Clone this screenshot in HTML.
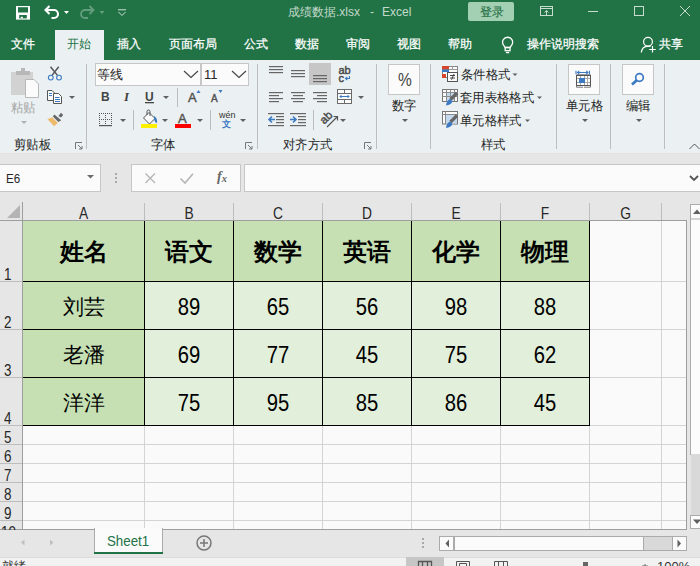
<!DOCTYPE html>
<html><head><meta charset="utf-8">
<style>
*{margin:0;padding:0;box-sizing:border-box}
html,body{width:700px;height:566px;overflow:hidden;background:#e6e6e6;font-family:"Liberation Sans",sans-serif;position:relative}
.a{position:absolute;white-space:nowrap}
.tt{color:#fff;font-size:12px;line-height:14px;-webkit-text-stroke:0.25px currentColor}
.rb{color:#262626;font-size:13px;line-height:14px;margin-top:1px;transform:scaleX(.95);transform-origin:0 0}
.rn{left:4px;margin-top:1.5px;font-size:16px;line-height:16px;color:#262626;transform:scaleX(.84);transform-origin:0 0}
.dg{font-size:23px!important;transform:scaleX(.88);margin-top:-1px}
.cell{position:absolute;text-align:center;color:#000}
</style></head><body>
<!-- title + tabs -->
<div class="a" style="left:0;top:0;width:700px;height:60px;background:#217346"></div>
<div class="a" style="left:55px;top:30px;width:49px;height:30px;background:#ebf1f2"></div>
<div class="a tt" style="left:288px;top:5px;color:#c3d9ca;-webkit-text-stroke:0">成绩数据.xlsx</div>
<div class="a tt" style="left:370px;top:5px;color:#c3d9ca;-webkit-text-stroke:0">-</div>
<div class="a tt" style="left:382px;top:5px;color:#c3d9ca;-webkit-text-stroke:0">Excel</div>
<svg class="a" style="left:0;top:0" width="700" height="60">
 <!-- save -->
 <rect x="16" y="6" width="14" height="13.6" fill="#fff"/>
 <rect x="18" y="7.2" width="10" height="5.3" fill="#217346"/>
 <rect x="19.2" y="15" width="7.6" height="3.4" fill="#217346"/>
 <rect x="20.8" y="16.8" width="2" height="1.6" fill="#fff"/>
 <!-- undo -->
 <path d="M46,10 H54 A4,4 0 0 1 54,18 H51.5" fill="none" stroke="#fff" stroke-width="2.1"/>
 <path d="M49.5,6 L45.5,10 L49.5,14" fill="none" stroke="#fff" stroke-width="2.1"/>
 <path d="M64,11 h5 l-2.5,3z" fill="#fff"/>
 <!-- redo (disabled) -->
 <g opacity="0.3">
 <path d="M93,10 H85 A4,4 0 0 0 85,18 H88" fill="none" stroke="#fff" stroke-width="1.8"/>
 <path d="M89.5,6 L93.5,10 L89.5,14" fill="none" stroke="#fff" stroke-width="1.8"/>
 <path d="M99.5,11 h5 l-2.5,3z" fill="#fff"/>
 </g>
 <!-- customize -->
 <path d="M118,9.8 h8" stroke="#d0e2d6" stroke-width="1"/>
 <path d="M118.5,12 L122,15.5 L125.5,12" fill="none" stroke="#d0e2d6" stroke-width="1"/>
 <!-- window icons -->
 <g fill="none" stroke="#c8dccf" stroke-width="1">
  <rect x="540.5" y="6.5" width="12" height="9"/>
  <path d="M540.5,8.5 H552.5 M546.5,15 V10.5 M544.5,12.5 L546.5,10.5 L548.5,12.5"/>
  <path d="M588,11.5 H598"/>
  <rect x="634.5" y="6.5" width="9" height="9"/>
  <path d="M680,6 L690,16 M690,6 L680,16"/>
 </g>
 <!-- lightbulb -->
 <g fill="none" stroke="#fff" stroke-width="1.3">
  <path d="M505.2,47.5 L503.2,44.6 A5,5 0 1 1 512,44.6 L510,47.5 Z"/>
  <rect x="505.2" y="47.5" width="4.8" height="3.2"/>
  <path d="M506,52.6 H509.2"/>
 </g>
 <!-- person -->
 <g fill="none" stroke="#fff" stroke-width="1.2">
  <circle cx="648" cy="41.8" r="4.4"/>
  <path d="M641.3,52.5 C641.8,49 644,46.6 647,46.4 H650.5"/>
  <path d="M652.5,46 V52.6 M649.2,49.5 H655.8"/>
 </g>
</svg>
<div class="a" style="left:468px;top:2px;width:46px;height:19px;background:#a3cfb2;border-radius:2px"></div>
<div class="a tt" style="left:480px;top:5px;color:#1f6e42;-webkit-text-stroke:0.1px currentColor">登录</div>

<div class="a tt" style="left:11px;top:37px">文件</div>
<div class="a tt" style="left:67px;top:37px;color:#217346;-webkit-text-stroke:0">开始</div>
<div class="a tt" style="left:117px;top:37px">插入</div>
<div class="a tt" style="left:169px;top:37px">页面布局</div>
<div class="a tt" style="left:244px;top:37px">公式</div>
<div class="a tt" style="left:295px;top:37px">数据</div>
<div class="a tt" style="left:346px;top:37px">审阅</div>
<div class="a tt" style="left:397px;top:37px">视图</div>
<div class="a tt" style="left:448px;top:37px">帮助</div>
<div class="a tt" style="left:527px;top:37px">操作说明搜索</div>
<div class="a tt" style="left:659px;top:37px">共享</div>

<!-- ribbon -->
<div class="a" style="left:0;top:60px;width:700px;height:93px;background:#ebf1f2"></div>


<!-- ribbon content -->
<svg class="a" style="left:0;top:0" width="700" height="160">
 <g fill="none" stroke="#bdbdbd" stroke-width="1">
  <line x1="86.5" y1="64" x2="86.5" y2="149"/>
  <line x1="257.5" y1="64" x2="257.5" y2="149"/>
  <line x1="376.5" y1="64" x2="376.5" y2="149"/>
  <line x1="430.5" y1="64" x2="430.5" y2="149"/>
  <line x1="556.5" y1="64" x2="556.5" y2="149"/>
  <line x1="610.5" y1="64" x2="610.5" y2="149"/>
  <line x1="664.5" y1="64" x2="664.5" y2="149"/>
  <line x1="177.5" y1="88" x2="177.5" y2="107"/>
  <line x1="133.5" y1="110" x2="133.5" y2="130"/>
  <line x1="210.5" y1="110" x2="210.5" y2="130"/>
  <line x1="313.5" y1="110" x2="313.5" y2="130"/>
 </g>
 <!-- launchers -->
 <g fill="none" stroke="#777" stroke-width="1">
  <path d="M75.5,149 V142.5 H82"/><path d="M78,145 L82,149 M82,146 V149 H79"/>
  <path d="M245.5,149 V142.5 H252"/><path d="M248,145 L252,149 M252,146 V149 H249"/>
  <path d="M364.5,149 V142.5 H371"/><path d="M367,145 L371,149 M371,146 V149 H368"/>
 </g>
 <!-- dropdown triangles -->
 <g fill="#606060">
  <path d="M21,121 h6 l-3,3z" fill="#b0b0b0"/>
  <path d="M69,96 h6 l-3,3z"/>
  <path d="M163,96 h6 l-3,3z"/>
  <path d="M120,119 h6 l-3,3z"/>
  <path d="M162,119 h6 l-3,3z"/>
  <path d="M197,119 h6 l-3,3z"/>
  <path d="M240,119 h6 l-3,3z"/>
  <path d="M358,96 h6 l-3,3z"/>
  <path d="M340,119 h6 l-3,3z"/>
  <path d="M402,119 h6 l-3,3z"/>
  <path d="M512.5,73.5 h5 l-2.5,2.5z"/>
  <path d="M537,96.5 h5 l-2.5,2.5z"/>
  <path d="M525,119.5 h5 l-2.5,2.5z"/>
  <path d="M582,119 h6 l-3,3z"/>
  <path d="M636,119 h6 l-3,3z"/>
 </g>
 <!-- paste (disabled) -->
 <g>
  <rect x="11" y="72" width="22" height="23" fill="#d2d2d2"/>
  <rect x="16" y="71" width="14" height="4" fill="#b8b8b8"/>
  <rect x="21" y="68" width="4" height="3" fill="#b8b8b8"/>
  <path d="M25.5,79.5 H34 L38.5,84 V97.5 H25.5 Z" fill="#fbfbfb" stroke="#b8b8b8"/>
 </g>
 <!-- scissors -->
 <g fill="none" stroke-width="1.4">
  <path d="M50.5,66.8 L57.5,75.4 M58.7,66.8 L52,75.4" stroke="#555" stroke-width="1.5"/>
  <circle cx="50.8" cy="77.6" r="2.4" stroke="#3b79c2" stroke-width="1.1"/>
  <circle cx="59" cy="77.6" r="2.4" stroke="#3b79c2" stroke-width="1.1"/>
 </g>
 <!-- copy -->
 <g fill="none" stroke="#555" stroke-width="1">
  <path d="M47.5,90.5 H52 L54.5,93 V100.5 H47.5 Z" fill="#fbfbfb"/>
  <path d="M53.5,93.5 H58.5 L61.5,96.5 V103.5 H53.5 Z" fill="#fbfbfb"/>
  <path d="M49,93.5 h3 M49,95.5 h3 M55,97.5 h4.5 M55,99.5 h5 M55,101.5 h5" stroke="#3b79c2"/>
 </g>
 <!-- format painter -->
 <path d="M47.4,119.3 L52.2,117.2 L57.8,123 L54.2,126.3 Z" fill="#eebb6e"/>
 <path d="M54.4,114.6 L61.2,120.2 L58.4,122 L52.9,116.6 Z" fill="#666"/>
 <path d="M61,112.8 L63.2,115 L61,117.6 L58.4,116 Z" fill="#666"/>
 <!-- font boxes -->
 <rect x="95.5" y="63.5" width="105" height="22" fill="#fbfbfb" stroke="#c6c6c6"/>
 <rect x="201.5" y="63.5" width="47" height="22" fill="#fbfbfb" stroke="#c6c6c6"/>
 <path d="M184,71 L191,77.5 L198,71" fill="none" stroke="#444" stroke-width="1.15"/>
 <path d="M232,71 L239,77.5 L246,71" fill="none" stroke="#444" stroke-width="1.15"/>
 <!-- U underline -->
 <rect x="145" y="102" width="9" height="1.3" fill="#444"/>
 <!-- borders icon -->
 <g fill="#555">
  <path d="M99,125h13v1.2h-13z" />
 </g>
 <g fill="none" stroke="#555" stroke-width="1" stroke-dasharray="1,1">
  <path d="M99.5,113 V125 M105.5,113 V125 M111.5,113 V125 M99,113.5 H112 M99,119.5 H112"/>
 </g>
 <!-- fill bucket -->
 <path d="M143.5,118 L149,112.5 L155,118.5 L149.5,124 Z" fill="#fbfbfb" stroke="#555"/>
 <path d="M147,115 V111.5 A1.5,1.5 0 0 1 150,111.5 V116" fill="none" stroke="#555"/>
 <path d="M154,116 Q158.5,119 156.5,123.5 Q153.5,121 154,116Z" fill="#3b79c2"/>
 <rect x="141" y="124" width="16" height="4" fill="#fff000"/>
 <!-- font color -->
 <rect x="175" y="124" width="16" height="4" fill="#ff0000"/>
 <!-- grow/shrink triangles -->
 <path d="M196.5,93 L198.5,90 L200.5,93Z" fill="#3b79c2"/>
 <path d="M218.5,90 L220.5,93 L222.5,90Z" fill="#3b79c2"/>
 <!-- alignment lines -->
 <g fill="#666">
  <rect x="269" y="66" width="14" height="1.2"/><rect x="269" y="69" width="14" height="1.2"/><rect x="269" y="72" width="14" height="1.2"/>
  <rect x="291" y="70" width="14" height="1.2"/><rect x="291" y="73" width="14" height="1.2"/><rect x="291" y="76" width="14" height="1.2"/>
 </g>
 <rect x="309" y="63" width="22" height="22" fill="#c6c6c6"/>
 <g fill="#666">
  <rect x="313" y="75" width="14" height="1.2"/><rect x="313" y="78" width="14" height="1.2"/><rect x="313" y="81" width="14" height="1.2"/>
  <rect x="269" y="92" width="14" height="1.2"/><rect x="269" y="95" width="10" height="1.2"/><rect x="269" y="98" width="14" height="1.2"/><rect x="269" y="101" width="10" height="1.2"/>
  <rect x="291" y="92" width="14" height="1.2"/><rect x="293" y="95" width="10" height="1.2"/><rect x="291" y="98" width="14" height="1.2"/><rect x="293" y="101" width="10" height="1.2"/>
  <rect x="313" y="92" width="14" height="1.2"/><rect x="317" y="95" width="10" height="1.2"/><rect x="313" y="98" width="14" height="1.2"/><rect x="317" y="101" width="10" height="1.2"/>
  <!-- indent -->
  <rect x="268" y="113" width="16" height="1.2"/><rect x="276" y="116" width="8" height="1.2"/><rect x="276" y="119" width="8" height="1.2"/><rect x="276" y="122" width="8" height="1.2"/><rect x="268" y="125" width="16" height="1.2"/>
  <rect x="290" y="113" width="16" height="1.2"/><rect x="298" y="116" width="8" height="1.2"/><rect x="298" y="119" width="8" height="1.2"/><rect x="298" y="122" width="8" height="1.2"/><rect x="290" y="125" width="16" height="1.2"/>
 </g>
 <g fill="none" stroke="#3b79c2" stroke-width="1.6">
  <path d="M269,119.5 H275 M272,116.5 L269,119.5 L272,122.5"/>
  <path d="M290,119.5 H296 M293,116.5 L296,119.5 L293,122.5"/>
 </g>
 <!-- orientation -->
 <g fill="none" stroke="#555" stroke-width="1.2">
  <path d="M327,127 L337,117 M333.5,116.5 H337.5 V120.5"/>
 </g>
 <text x="320" y="121.5" font-family="Liberation Sans" font-size="11.5" fill="#4a4a4a" stroke="#4a4a4a" stroke-width="0.45" transform="rotate(-45 326 118)">ab</text>
 <!-- wrap text -->
 <text x="338.5" y="74" font-family="Liberation Sans" font-size="11" fill="#4a4a4a" stroke="#4a4a4a" stroke-width="0.45">ab</text>
 <text x="338.5" y="81.5" font-family="Liberation Sans" font-size="11" fill="#4a4a4a" stroke="#4a4a4a" stroke-width="0.45">c</text>
 <path d="M349.5,76 V78.5 H345.5 M347.3,76.8 L345.5,78.5 L347.3,80.2" fill="none" stroke="#3b79c2" stroke-width="1.1"/>
 <!-- merge -->
 <g fill="none" stroke="#6a6a6a" stroke-width="1">
  <rect x="337.5" y="89.5" width="14" height="14" fill="#fbfbfb"/>
  <path d="M337.5,93.5 H351.5 M337.5,99.5 H351.5 M344.5,89.5 V93.5 M344.5,99.5 V103.5"/>
 </g>
 <path d="M340,96.5 H349 M341.5,95 L340,96.5 L341.5,98 M347.5,95 L349,96.5 L347.5,98" fill="none" stroke="#3b79c2" stroke-width="1"/>
 <!-- number box -->
 <rect x="388.5" y="64.5" width="31" height="30" fill="#fbfbfb" stroke="#c6c6c6"/>
 <!-- cond formatting -->
 <g>
  <rect x="442.5" y="66.5" width="15" height="11" fill="#fbfbfb" stroke="#888"/>
  <path d="M442.5,69.5 H457.5 M448.5,66.5 V73 M452.5,66.5 V70" stroke="#999" fill="none"/>
  <rect x="442" y="66" width="7" height="3.5" fill="#d9472b"/>
  <rect x="442" y="69.5" width="7" height="2.5" fill="#3b79c2"/>
  <rect x="442" y="74" width="4" height="4" fill="#d9472b"/>
  <rect x="447.5" y="72.5" width="10" height="9" fill="#fbfbfb" stroke="#555"/>
  <path d="M450,75.5 h5 M450,78 h5 M454,74 L451.5,79.8" stroke="#333" stroke-width="0.9"/>
 </g>
 <!-- table format -->
 <g fill="none" stroke="#777" stroke-width="1">
  <rect x="442.5" y="89.5" width="15" height="12" fill="#fbfbfb"/>
  <rect x="446" y="93" width="8" height="8" fill="#c5d9ee" stroke="none"/>
  <path d="M442.5,92.5 H457.5 M442.5,96.5 H457.5 M446.5,89.5 V101.5 M450.5,89.5 V101.5 M454.5,89.5 V101.5" stroke="#8a8a8a"/>
  <rect x="442.5" y="111.5" width="15" height="12.5" fill="#fbfbfb"/>
  <rect x="446" y="115" width="11" height="8.5" fill="#c5d9ee" stroke="none"/>
  <path d="M442.5,114.5 H457.5 M445.5,111.5 V124" stroke="#8a8a8a"/>
 </g>
 <g>
  <path d="M450.5,99.5 L457,93" stroke="#666" stroke-width="3.2"/>
  <path d="M446,105.5 Q446.5,100.5 450,99 L452.5,101.5 Q451,105 446,105.5Z" fill="#3b79c2"/>
  <path d="M450.5,122 L457,115.5" stroke="#666" stroke-width="3.2"/>
  <path d="M446,128 Q446.5,123 450,121.5 L452.5,124 Q451,127.5 446,128Z" fill="#3b79c2"/>
 </g>
 <!-- cells box -->
 <rect x="568.5" y="64.5" width="31" height="30" fill="#fbfbfb" stroke="#c6c6c6"/>
 <g fill="none" stroke="#a8a8a8" stroke-width="1">
  <path d="M580.5,75.5 V85 M584.5,75.5 V85 M587.5,75.5 V85 M576.5,78.5 H590.5 M576.5,82.5 H590.5"/>
 </g>
 <rect x="579" y="78" width="6" height="5" fill="#3b79c2"/>
 <g fill="none" stroke="#555" stroke-width="1">
  <rect x="576.5" y="75.5" width="14" height="10"/>
  <path d="M576.5,85.5 V87.2 H583 M584,87.2 H590.5 V85.5" stroke="#777"/>
 </g>
 <path d="M576.5,75 H590.5" stroke="#555" stroke-width="1.2"/>
 <g fill="none" stroke="#3b79c2" stroke-width="1.1">
  <path d="M577.5,72.5 H588 M579.3,70.8 L577.5,72.5 L579.3,74.2 M586.2,70.8 L588,72.5 L586.2,74.2 M576,70.8 V74.2 M589.5,70.8 V74.2"/>
 </g>
 <!-- edit box -->
 <rect x="622.5" y="64.5" width="31" height="30" fill="#fbfbfb" stroke="#c6c6c6"/>
 <circle cx="639.5" cy="77.5" r="3.8" fill="none" stroke="#3b79c2" stroke-width="1.7"/>
 <path d="M636.8,80.2 L632,84.5" stroke="#3b79c2" stroke-width="2.8"/>
 <!-- collapse -->
 <path d="M689.5,149 L694.5,144 L699.5,149" fill="none" stroke="#555" stroke-width="1"/>
</svg>
<div class="a rb" style="left:11px;top:100px;color:#a6a6a6">粘贴</div>
<div class="a rb" style="left:14px;top:137px">剪贴板</div>
<div class="a rb" style="left:97px;top:67px;font-size:13px;transform:none">等线</div>
<div class="a rb" style="left:204px;top:67px;font-size:13px;transform:none">11</div>
<div class="a" style="left:101px;top:90px;font-size:12px;font-weight:bold;color:#444">B</div>
<div class="a" style="left:124px;top:89px;font-size:13px;font-weight:bold;font-style:italic;font-family:'Liberation Serif';color:#444">I</div>
<div class="a" style="left:145px;top:90px;font-size:12px;font-weight:bold;color:#444">U</div>
<div class="a" style="left:188px;top:90px;font-size:13px;color:#505050;-webkit-text-stroke:0.4px #505050">A</div>
<div class="a" style="left:211px;top:93px;font-size:10px;color:#505050;-webkit-text-stroke:0.4px #505050">A</div>
<div class="a" style="left:178px;top:111px;font-size:13px;color:#505050;-webkit-text-stroke:0.4px #505050">A</div>
<div class="a" style="left:219px;top:110px;font-size:9px;color:#333">wén</div>
<div class="a" style="left:222px;top:118px;font-size:9px;color:#3b79c2;font-weight:bold">文</div>
<div class="a rb" style="left:151px;top:137px">字体</div>
<div class="a rb" style="left:283px;top:137px">对齐方式</div>
<div class="a" style="left:398px;top:73px;font-size:15.5px;color:#444;transform:scaleY(1.15);transform-origin:0 100%">%</div>
<div class="a rb" style="left:392px;top:98px">数字</div>
<div class="a rb" style="left:461px;top:67px">条件格式</div>
<div class="a rb" style="left:460px;top:90px">套用表格格式</div>
<div class="a rb" style="left:460px;top:113px">单元格样式</div>
<div class="a rb" style="left:481px;top:137px">样式</div>
<div class="a rb" style="left:566px;top:98px">单元格</div>
<div class="a rb" style="left:626px;top:98px">编辑</div>

<div class="a" style="left:0;top:153px;width:700px;height:1px;background:#e8e0da"></div>
<!-- formula bar -->
<div class="a" style="left:-1px;top:164px;width:102px;height:28px;background:#fbfbfb;border:1px solid #c6c6c6"></div>
<div class="a" style="left:6px;top:171px;font-size:13.5px;line-height:16px;color:#262626;transform:scaleX(.86);transform-origin:0 0">E6</div>
<div class="a" style="left:131px;top:164px;width:110px;height:28px;background:#fbfbfb;border:1px solid #c6c6c6"></div>
<div class="a" style="left:244px;top:164px;width:460px;height:28px;background:#fbfbfb;border:1px solid #c6c6c6"></div>

<svg class="a" style="left:0;top:150px" width="700" height="50">
 <path d="M87,25 h7 l-3.5,3.5z" fill="#6b6b6b"/>
 <g fill="#a8a8a8"><rect x="115" y="23" width="2" height="2"/><rect x="115" y="27" width="2" height="2"/><rect x="115" y="31" width="2" height="2"/></g>
 <path d="M145.5,23.5 L155,33 M155,23.5 L145.5,33" stroke="#b4b4b4" stroke-width="1.3" fill="none"/>
 <path d="M180.5,28.5 L185,33 L193,23.8" stroke="#b4b4b4" stroke-width="1.6" fill="none"/>
 <path d="M690,26 L694,30 L698,26" stroke="#555" stroke-width="1.8" fill="none"/>
</svg>
<svg class="a" style="left:200px;top:160px" width="40" height="35"><text x="17" y="21.3" font-family="Liberation Serif" font-style="italic" font-weight="bold" font-size="14" fill="#666">f</text><text x="21.8" y="21.6" font-family="Liberation Serif" font-style="italic" font-weight="bold" font-size="10.5" fill="#666">x</text></svg>
<!-- grid -->
<svg class="a" style="left:0;top:0" width="700" height="566">
  <rect x="23" y="221" width="663" height="308" fill="#fafafa"/>
  <!-- fills -->
  <rect x="23" y="221" width="566" height="60" fill="#c6e0b4"/>
  <rect x="23" y="282" width="121" height="143" fill="#c6e0b4"/>
  <rect x="145" y="282" width="444" height="143" fill="#e2efda"/>
  <g fill="#d4d4d4">
    <rect x="589" y="281" width="97" height="1"/>
    <rect x="589" y="329" width="97" height="1"/>
    <rect x="589" y="377" width="97" height="1"/>
    <rect x="23" y="425" width="663" height="1"/>
    <rect x="23" y="444" width="663" height="1"/>
    <rect x="23" y="463" width="663" height="1"/>
    <rect x="23" y="482" width="663" height="1"/>
    <rect x="23" y="501" width="663" height="1"/>
    <rect x="23" y="520" width="663" height="1"/>
    <rect x="144" y="425" width="1" height="104"/>
    <rect x="233" y="425" width="1" height="104"/>
    <rect x="322" y="425" width="1" height="104"/>
    <rect x="411" y="425" width="1" height="104"/>
    <rect x="500" y="425" width="1" height="104"/>
    <rect x="589" y="425" width="1" height="104"/>
    <rect x="661" y="221" width="1" height="308"/>
  </g>
  <g fill="#000">
    <rect x="23" y="281" width="567" height="1"/>
    <rect x="23" y="329" width="567" height="1"/>
    <rect x="23" y="377" width="567" height="1"/>
    <rect x="23" y="425" width="567" height="1"/>
    <rect x="144" y="221" width="1" height="205"/>
    <rect x="233" y="221" width="1" height="205"/>
    <rect x="322" y="221" width="1" height="205"/>
    <rect x="411" y="221" width="1" height="205"/>
    <rect x="500" y="221" width="1" height="205"/>
    <rect x="589" y="221" width="1" height="205"/>
  </g>
  <!-- headers -->
  <rect x="0" y="202" width="686" height="19" fill="#e6e6e6"/>
  <rect x="0" y="220" width="687" height="1" fill="#9e9e9e"/>
  <rect x="22" y="202" width="1" height="327" fill="#9e9e9e"/>
  <g fill="#bdbdbd">
    <rect x="144" y="203" width="1" height="17"/>
    <rect x="233" y="203" width="1" height="17"/>
    <rect x="322" y="203" width="1" height="17"/>
    <rect x="411" y="203" width="1" height="17"/>
    <rect x="500" y="203" width="1" height="17"/>
    <rect x="589" y="203" width="1" height="17"/>
    <rect x="661" y="203" width="1" height="17"/>
    <rect x="0" y="281" width="22" height="1"/>
    <rect x="0" y="329" width="22" height="1"/>
    <rect x="0" y="377" width="22" height="1"/>
    <rect x="0" y="425" width="22" height="1"/>
    <rect x="0" y="444" width="22" height="1"/>
    <rect x="0" y="463" width="22" height="1"/>
    <rect x="0" y="482" width="22" height="1"/>
    <rect x="0" y="501" width="22" height="1"/>
    <rect x="0" y="520" width="22" height="1"/>
  </g>
  <rect x="686" y="220" width="1" height="309" fill="#9e9e9e"/>
  <rect x="0" y="529" width="687" height="1" fill="#9e9e9e"/>
  <polygon points="7,218 20,218 20,205" fill="#b4b4b4"/>
</svg>

<!-- column header letters -->
<div class="a" style="left:23px;top:206px;width:121px;text-align:center;font-size:16px;line-height:16px;color:#262626;transform:scaleX(.86)">A</div>
<div class="a" style="left:145px;top:206px;width:88px;text-align:center;font-size:16px;line-height:16px;color:#262626;transform:scaleX(.86)">B</div>
<div class="a" style="left:234px;top:206px;width:88px;text-align:center;font-size:16px;line-height:16px;color:#262626;transform:scaleX(.86)">C</div>
<div class="a" style="left:323px;top:206px;width:88px;text-align:center;font-size:16px;line-height:16px;color:#262626;transform:scaleX(.86)">D</div>
<div class="a" style="left:412px;top:206px;width:88px;text-align:center;font-size:16px;line-height:16px;color:#262626;transform:scaleX(.86)">E</div>
<div class="a" style="left:501px;top:206px;width:88px;text-align:center;font-size:16px;line-height:16px;color:#262626;transform:scaleX(.86)">F</div>
<div class="a" style="left:590px;top:206px;width:71px;text-align:center;font-size:16px;line-height:16px;color:#262626;transform:scaleX(.86)">G</div>

<!-- row numbers -->
<div class="a rn" style="top:265px">1</div>
<div class="a rn" style="top:313px">2</div>
<div class="a rn" style="top:361px">3</div>
<div class="a rn" style="top:409px">4</div>
<div class="a rn" style="top:428px">5</div>
<div class="a rn" style="top:447px">6</div>
<div class="a rn" style="top:466px">7</div>
<div class="a rn" style="top:485px">8</div>
<div class="a rn" style="top:504px">9</div>
<div class="a rn" style="top:523px;left:1px;clip-path:inset(0 0 10.5px 0)">10</div>

<!-- cells -->
<div class="cell" style="left:23px;top:236px;width:121px;font-size:24px;font-weight:bold">姓名</div>
<div class="cell" style="left:145px;top:236px;width:88px;font-size:24px;font-weight:bold">语文</div>
<div class="cell" style="left:234px;top:236px;width:88px;font-size:24px;font-weight:bold">数学</div>
<div class="cell" style="left:323px;top:236px;width:88px;font-size:24px;font-weight:bold">英语</div>
<div class="cell" style="left:412px;top:236px;width:88px;font-size:24px;font-weight:bold">化学</div>
<div class="cell" style="left:501px;top:236px;width:88px;font-size:24px;font-weight:bold">物理</div>

<div class="cell" style="left:23px;top:293px;width:121px;font-size:21px">刘芸</div>
<div class="cell dg" style="left:145px;top:295px;width:88px;font-size:21px">89</div>
<div class="cell dg" style="left:234px;top:295px;width:88px;font-size:21px">65</div>
<div class="cell dg" style="left:323px;top:295px;width:88px;font-size:21px">56</div>
<div class="cell dg" style="left:412px;top:295px;width:88px;font-size:21px">98</div>
<div class="cell dg" style="left:501px;top:295px;width:88px;font-size:21px">88</div>

<div class="cell" style="left:23px;top:341px;width:121px;font-size:21px">老潘</div>
<div class="cell dg" style="left:145px;top:343px;width:88px;font-size:21px">69</div>
<div class="cell dg" style="left:234px;top:343px;width:88px;font-size:21px">77</div>
<div class="cell dg" style="left:323px;top:343px;width:88px;font-size:21px">45</div>
<div class="cell dg" style="left:412px;top:343px;width:88px;font-size:21px">75</div>
<div class="cell dg" style="left:501px;top:343px;width:88px;font-size:21px">62</div>

<div class="cell" style="left:23px;top:389px;width:121px;font-size:21px">洋洋</div>
<div class="cell dg" style="left:145px;top:391px;width:88px;font-size:21px">75</div>
<div class="cell dg" style="left:234px;top:391px;width:88px;font-size:21px">95</div>
<div class="cell dg" style="left:323px;top:391px;width:88px;font-size:21px">85</div>
<div class="cell dg" style="left:412px;top:391px;width:88px;font-size:21px">86</div>
<div class="cell dg" style="left:501px;top:391px;width:88px;font-size:21px">45</div>

<!-- scrollbars -->
<svg class="a" style="left:0;top:200px" width="700" height="366">
 <!-- vertical scrollbar -->
 <rect x="690.5" y="4.5" width="12" height="250" fill="#fbfbfb" stroke="#ababab"/>
 <rect x="690.5" y="4.5" width="12" height="14.5" fill="#fbfbfb" stroke="#ababab"/>
 <path d="M693,14 L697,9.5 L701,14Z" fill="#606060"/>
 <rect x="691" y="254" width="9" height="61" fill="#d9d9d9"/>
 <rect x="690.5" y="315.5" width="12" height="13" fill="#fbfbfb" stroke="#ababab"/>
 <path d="M693,319.5 L697,324 L701,319.5Z" fill="#606060"/>
 <!-- tab bar arrows -->
 <path d="M24.5,339.5 L21,342.5 L24.5,345.5Z" fill="#c0c0c0"/>
 <path d="M50,339.5 L53.5,342.5 L50,345.5Z" fill="#c0c0c0"/>
 <!-- plus circle -->
 <circle cx="204" cy="343" r="7" fill="none" stroke="#777" stroke-width="1.5"/>
 <path d="M200,343 H208 M204,339 V347" stroke="#777" stroke-width="1.5"/>
 <!-- split dots -->
 <g fill="#a8a8a8"><rect x="422" y="338" width="2" height="2"/><rect x="422" y="342" width="2" height="2"/><rect x="422" y="346" width="2" height="2"/></g>
 <!-- horizontal scrollbar -->
 <rect x="439.5" y="336.5" width="247" height="14" fill="#fbfbfb" stroke="#ababab"/>
 <rect x="439.5" y="336.5" width="14" height="14" fill="#fbfbfb" stroke="#ababab"/>
 <path d="M449,339.5 L445.5,343.5 L449,347.5Z" fill="#606060"/>
 <rect x="454.5" y="336.5" width="189" height="14" fill="#fbfbfb" stroke="#ababab"/>
 <rect x="644" y="337" width="28" height="13" fill="#d9d9d9"/>
 <rect x="672.5" y="336.5" width="14" height="14" fill="#fbfbfb" stroke="#ababab"/>
 <path d="M677.5,339.5 L681,343.5 L677.5,347.5Z" fill="#606060"/>
</svg>

<!-- sheet tabs -->
<div class="a" style="left:94px;top:528px;width:69px;height:26px;background:#fbfbfb;border:1px solid #ababab;border-top:none"></div>
<div class="a" style="left:94px;top:552px;width:69px;height:2px;background:#217346"></div>
<div class="a" style="left:107px;top:533px;font-size:14px;line-height:16px;color:#217346;transform:scaleX(.95);transform-origin:0 0">Sheet1</div>

<!-- status bar -->
<div class="a" style="left:0;top:557px;width:700px;height:9px;background:#f2f2f2;border-top:1px solid #dcdcdc"></div>
<div class="a" style="left:2px;top:559px;font-size:12px;line-height:14px;color:#333">就绪</div>
<svg class="a" style="left:0;top:556px" width="700" height="10">
 <rect x="406" y="1" width="38" height="9" fill="#c6c6c6"/>
 <g fill="none" stroke="#555" stroke-width="1">
  <path d="M418.5,10 V5.5 H431.5 V10 M422.5,5.5 V10 M427.5,5.5 V10" stroke-width="1.3"/>
  <path d="M456.5,10 V5.5 H469.5 V10 M459.5,10 V7.5 H466.5 V10"/>
  <path d="M494.5,10 V5.5 H507.5 V10 M498.5,5.5 V10 M503.5,5.5 V10"/>
 </g>
 
 <rect x="583" y="6" width="5" height="4" fill="#666"/>
 <path d="M642,10 h6 M645,8 v2" stroke="#666" stroke-width="1"/>
</svg>
<div class="a" style="left:657px;top:560px;font-size:13px;line-height:14px;color:#333">100%</div>
</body></html>
